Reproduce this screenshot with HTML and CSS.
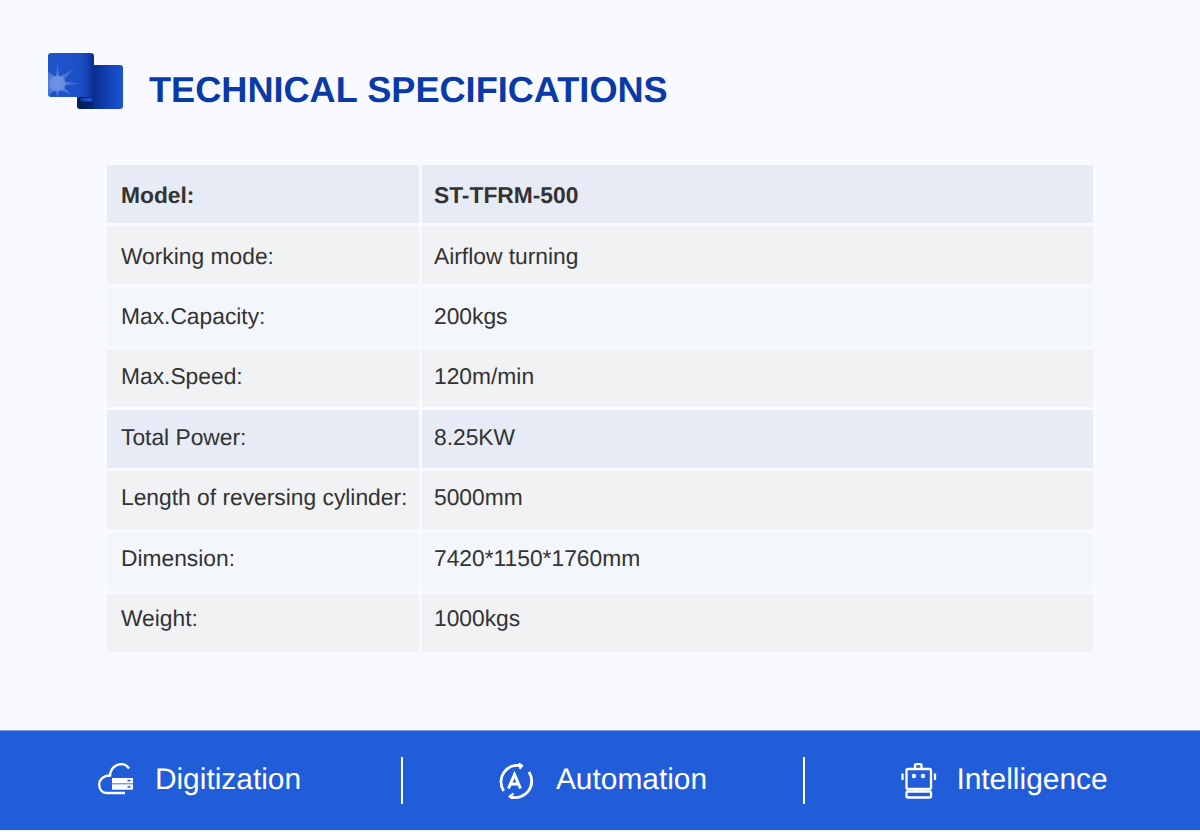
FILE: index.html
```html
<!DOCTYPE html>
<html lang="en">
<head>
<meta charset="utf-8">
<title>Technical Specifications</title>
<link rel="stylesheet" href="styles.css">
</head>
<body>
<main class="page">
  <header class="heading">
    <svg class="logo" width="76" height="58" viewBox="0 0 76 58" aria-hidden="true">
      <defs>
        <linearGradient id="sheetA" x1="0" x2="1" y1="0" y2="0">
          <stop offset="0" stop-color="#1f55cb"/>
          <stop offset=".65" stop-color="#1c50c8"/>
          <stop offset=".85" stop-color="#1743b4"/>
          <stop offset="1" stop-color="#0a2c8c"/>
        </linearGradient>
        <linearGradient id="sheetB" x1="0" x2="1" y1="0" y2="0">
          <stop offset="0" stop-color="#0a2f92"/>
          <stop offset=".38" stop-color="#0a2f92"/>
          <stop offset=".7" stop-color="#1442ba"/>
          <stop offset="1" stop-color="#1b54d4"/>
        </linearGradient>
        <linearGradient id="roll" x1="0" x2="1" y1="0" y2="0">
          <stop offset="0" stop-color="#041a52"/>
          <stop offset="1" stop-color="#08277c"/>
        </linearGradient>
        <linearGradient id="rollTop" x1="0" x2="1" y1="0" y2="0">
          <stop offset="0" stop-color="#0f3aa4"/>
          <stop offset=".7" stop-color="#2059d0"/>
          <stop offset="1" stop-color="#123fae"/>
        </linearGradient>
        <radialGradient id="burst" gradientUnits="userSpaceOnUse" cx="9.500" cy="30.500" r="25">
          <stop offset="0" stop-color="#7f9fe8" stop-opacity=".9"/>
          <stop offset=".4" stop-color="#6f92e2" stop-opacity=".6"/>
          <stop offset="1" stop-color="#6f92e2" stop-opacity=".05"/>
        </radialGradient>
        <clipPath id="sheetClip"><rect x="0" y="0" width="46" height="44" rx="3"/></clipPath>
      </defs>
      <rect x="29" y="12" width="46" height="44" rx="3" fill="url(#sheetB)"/>
      <rect x="0" y="0" width="46" height="44" rx="3" fill="url(#sheetA)"/>
      <g clip-path="url(#sheetClip)">
        <path d="M9.500 9 L11 24 L27 15 L14 28.500 L33 30.500 L14 32.500 L24 42 L11 36 L9.500 48 L8 36 L-1 44 L0 30.500 L-1 18 L8 24 Z" fill="url(#burst)"/>
        <circle cx="9.500" cy="30.500" r="8" fill="#6d8fe0" opacity=".85"/>
      </g>
      <path d="M33 44 H46 V56 H33 Q29 56 29 51 Q29 44 33 44 Z" fill="url(#roll)"/>
      <rect x="32" y="45" width="13.500" height="3.500" rx="1.700" fill="url(#rollTop)"/>
    </svg>
    <h1 class="title">TECHNICAL SPECIFICATIONS</h1>
  </header>

  <section class="specs">
    <div class="row row-blue row-bold"><div class="cell">Model:</div><div class="cell">ST-TFRM-500</div></div>
    <div class="row row-gray"><div class="cell">Working mode:</div><div class="cell">Airflow turning</div></div>
    <div class="row row-light"><div class="cell">Max.Capacity:</div><div class="cell">200kgs</div></div>
    <div class="row row-gray"><div class="cell">Max.Speed:</div><div class="cell">120m/min</div></div>
    <div class="row row-blue"><div class="cell">Total Power:</div><div class="cell">8.25KW</div></div>
    <div class="row row-gray"><div class="cell">Length of reversing cylinder:</div><div class="cell">5000mm</div></div>
    <div class="row row-light"><div class="cell">Dimension:</div><div class="cell">7420*1150*1760mm</div></div>
    <div class="row row-gray"><div class="cell">Weight:</div><div class="cell">1000kgs</div></div>
  </section>

  <footer class="band">
    <div class="feature feature-one">
      <svg class="feature-icon" width="36" height="36" viewBox="0 0 36 36" fill="none" stroke="#fff" stroke-width="2.300" aria-hidden="true">
        <path d="M31 5.500 C29 2.500 26.500 1.200 23.500 1.200 C17 1.200 12.500 6 12 12.500 C5.500 12.500 1.200 16.500 1.200 21.800 C1.200 26.800 4.500 30 8.500 30 H27"/>
        <rect x="14" y="15" width="21" height="5.400" fill="#fff" stroke="none"/>
        <rect x="14" y="21.300" width="21" height="5.400" fill="#fff" stroke="none"/>
        <rect x="29.500" y="16.800" width="3" height="1.600" fill="#215dd8" stroke="none"/>
        <rect x="29.500" y="23.100" width="3" height="1.600" fill="#215dd8" stroke="none"/>
      </svg>
      <span class="feature-label">Digitization</span>
    </div>
    <span class="divider"></span>
    <div class="feature feature-two">
      <svg class="feature-icon" width="38" height="36" viewBox="0 0 38 36" fill="none" stroke="#fff" stroke-width="2.800" aria-hidden="true">
        <path d="M7.700 28 A16.500 16.500 0 0 1 25.700 2.900"/>
        <path d="M33 9 A16.500 16.500 0 0 1 14.300 33.800"/>
        <path d="M22.500 0.500 L26 2.800 L23.500 5.800" stroke-width="2.200"/>
        <path d="M17.500 30.500 L13.800 33.500 L17 35.800" stroke-width="2.200"/>
        <path d="M12.500 25.500 L18.500 11.500 L24.500 25.500 M14.700 21 H22.300" stroke-width="3"/>
      </svg>
      <span class="feature-label">Automation</span>
    </div>
    <span class="divider"></span>
    <div class="feature feature-three">
      <svg class="feature-icon" width="36" height="36" viewBox="0 0 36 36" fill="none" stroke="#fff" stroke-width="2.300" aria-hidden="true">
        <rect x="5.500" y="6" width="24.500" height="20" rx="1.500"/>
        <path d="M14 6 V2.500 Q14 1.200 15.500 1.200 H19 Q20.500 1.200 20.500 2.500 V6"/>
        <path d="M1.500 10.500 V17 M34 10.500 V17"/>
        <circle cx="13" cy="13" r="2.200" fill="#fff" stroke="none"/>
        <circle cx="22" cy="13" r="2.200" fill="#fff" stroke="none"/>
        <path d="M14 26 V28.500 M21 26 V28.500"/>
        <rect x="5.500" y="28.500" width="24.500" height="6" rx="1"/>
      </svg>
      <span class="feature-label">Intelligence</span>
    </div>
  </footer>
</main>
</body>
</html>
```

FILE: styles.css
```css
* { box-sizing: border-box; }
html, body { margin: 0; padding: 0; }
body {
  width: 1200px;
  height: 832px;
  overflow: hidden;
  background: #f8faff;
  font-family: "Liberation Sans", Arial, sans-serif;
  text-rendering: geometricPrecision;
}
.page {
  display: flex;
  flex-direction: column;
  height: 832px;
}
.heading {
  display: flex;
  align-items: flex-start;
  height: 112px;
  margin-top: 53px;
  padding-left: 48px;
}
.logo { display: block; flex: none; }
.title {
  margin: 16px 0 0 25px;
  font-size: 36.150px;
  line-height: 42px;
  font-weight: 700;
  color: #0a3aa5;
  white-space: nowrap;
}
.specs {
  display: flex;
  flex-direction: column;
  gap: 3.300px;
  width: 986px;
  margin-left: 107px;
}
.row {
  display: grid;
  grid-template-columns: 312px 671px;
  column-gap: 3px;
  height: 58px;
  color: #333;
  font-size: 22.800px;
  line-height: 26px;
}
.cell {
  padding-left: 14px;
  white-space: nowrap;
}
.cell + .cell { padding-left: 12px; }
.row-blue .cell { background: #e6ebf5; }
.row-gray .cell { background: #f1f2f4; }
.row-light .cell { background: #f3f6fb; }
.row-bold { font-weight: 700; }
.row:nth-child(1) .cell { padding-top: 17px; }
.row:nth-child(2) .cell { padding-top: 17px; }
.row:nth-child(3) .cell { padding-top: 15px; }
.row:nth-child(4) .cell { padding-top: 14px; }
.row:nth-child(5) .cell { padding-top: 14px; }
.row:nth-child(6) .cell { padding-top: 13px; }
.row:nth-child(7) .cell { padding-top: 12px; }
.row:nth-child(8) .cell { padding-top: 11px; }
.band {
  display: flex;
  align-items: center;
  height: 100px;
  margin-top: 78px;
  background: #215dd8;
  border-top: 1px solid #7f9fe6;
}
.feature {
  display: flex;
  align-items: center;
  justify-content: center;
  color: #fff;
}
.feature-one { width: 401px; padding-right: 2px; gap: 21px; }
.feature-two { width: 400px; padding-right: 3px; gap: 22px; }
.feature-three { width: 395px; padding-left: 4px; gap: 19px; }
.feature-icon { display: block; flex: none; }
.feature-label { font-size: 29.900px; line-height: 34px; margin-bottom: 2px; }
.divider {
  flex: none;
  width: 2px;
  height: 47px;
  background: #fff;
}
```
